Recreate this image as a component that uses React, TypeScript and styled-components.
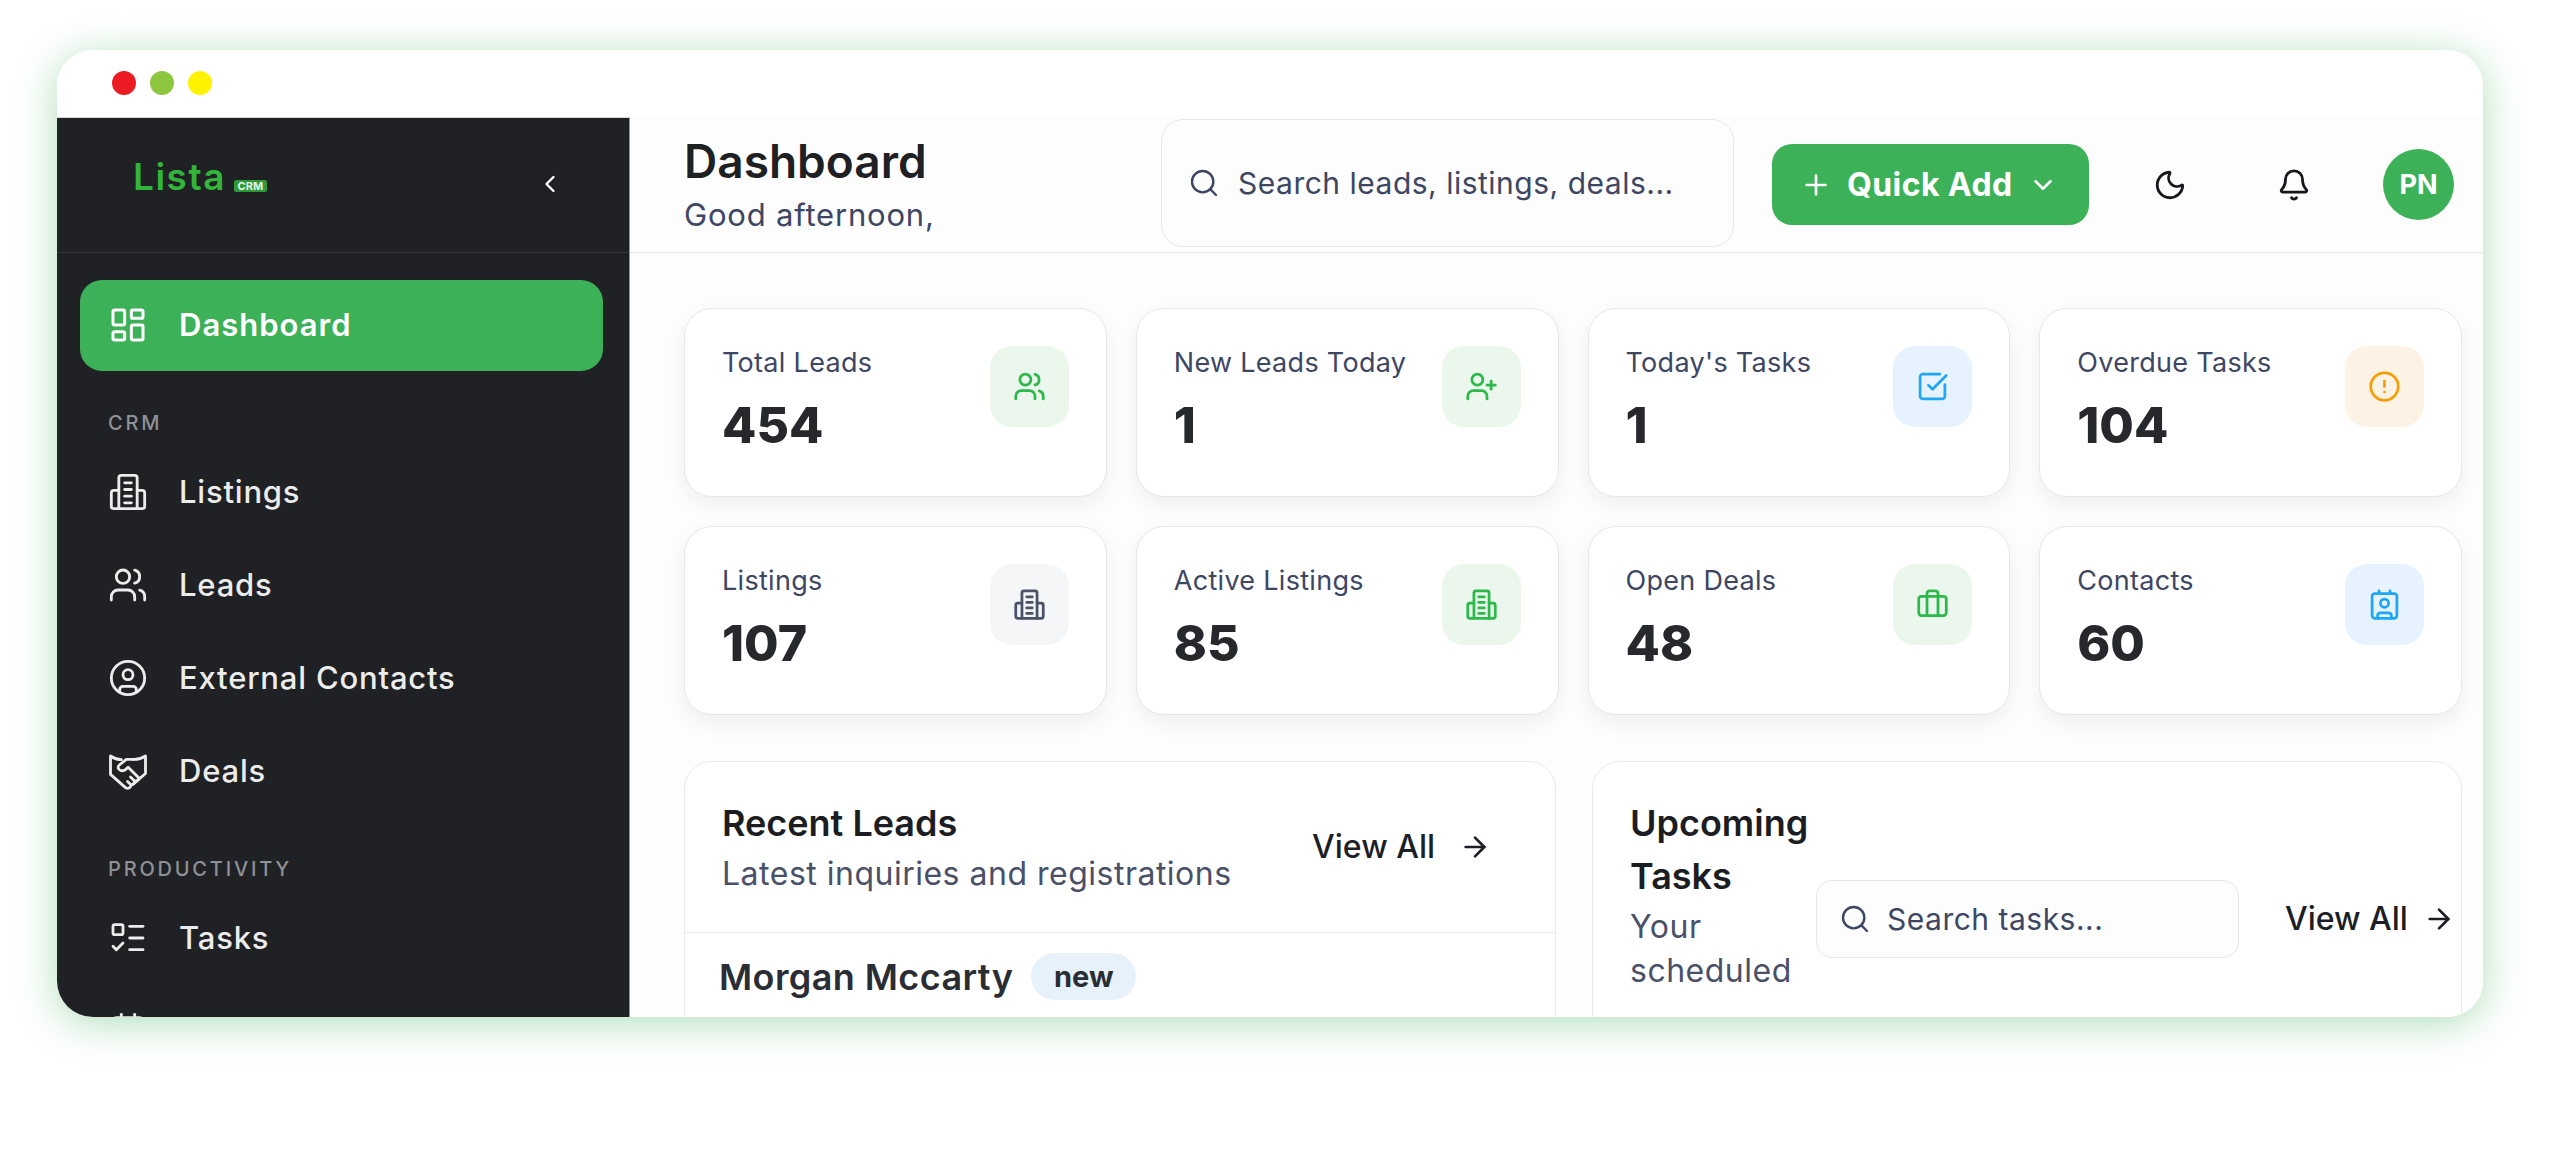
import React from 'react';
import styled, { createGlobalStyle } from 'styled-components';
import {
  ArrowRight,
  Bell,
  Briefcase,
  Calendar,
  ChevronDown,
  ChevronLeft,
  CircleAlert,
  CircleUser,
  Contact,
  LayoutDashboard,
  ListTodo,
  Moon,
  Plus,
  Search,
  SquareCheckBig,
  UserPlus,
  Users,
} from 'lucide-react';

const GlobalStyle = createGlobalStyle`
  html, body {
    margin: 0;
    padding: 0;
    background: #fff;
  }
  body {
    font-family: Inter, "Noto Sans", sans-serif;
    color: #1f2124;
  }
  * {
    box-sizing: border-box;
  }
`;

const BuildingIcon = ({ size = 24, strokeWidth = 2 }: { size?: number; strokeWidth?: number }) => (
  <svg width={size} height={size} viewBox="0 0 24 24" fill="none" stroke="currentColor" strokeWidth={strokeWidth} strokeLinecap="round" strokeLinejoin="round">
    <path d="M6.500 22V3.500A1.500 1.500 0 0 1 8 2h8a1.500 1.500 0 0 1 1.500 1.500V22Z" />
    <path d="M6.500 11H3.500A1.500 1.500 0 0 0 2 12.500v8A1.500 1.500 0 0 0 3.500 22h3" />
    <path d="M17.500 11h3a1.500 1.500 0 0 1 1.500 1.500v8a1.500 1.500 0 0 1-1.500 1.500h-3" />
    <path d="M10 6.500h4" />
    <path d="M10 10.500h4" />
    <path d="M10 14.500h4" />
    <path d="M10 18.500h4" />
  </svg>
);

const ShieldShakeIcon = ({ size = 24, strokeWidth = 2 }: { size?: number; strokeWidth?: number }) => (
  <svg width={size} height={size} viewBox="0 0 24 24" fill="none" stroke="currentColor" strokeWidth={strokeWidth} strokeLinecap="round" strokeLinejoin="round">
    <path d="M8 5.200C6 5.200 3.800 4.600 1.500 3v11l9 8c1.500 1 3 0 3.200-1.200" />
    <path d="M15 5c3 .2 5.400-.6 7.500-2v10.500L15 20" />
    <path d="M15.500 5H11L6.800 8.400c-1.200 1-.8 2.800.7 3.300 1.600.6 3.200-.5 4.600-2l6 6" />
    <path d="M18.100 15.700c.9 1.300-.8 3-2.300 2.100l-2.300-2.200" />
    <path d="M15.800 17.800c.5 1.300-1 2.800-2.300 2.200l-1.800-1.700" />
  </svg>
);

const Canvas = styled.div`
  width: 2560px;
  height: 1154px;
  padding: 50px 77px 137px 57px;
  background: #fff;
  overflow: hidden;
`;

const FrameGlow = styled.div`
  height: 100%;
  border-radius: 36px;
  box-shadow: 0 6px 40px rgba(64, 176, 90, 0.42);
`;

const Frame = styled.div`
  width: 100%;
  height: 100%;
  display: grid;
  grid-template-rows: 67px 1fr;
  background: #fff;
  border-radius: 36px;
  overflow: hidden;
`;

const TitleBar = styled.div`
  display: flex;
  align-items: center;
  gap: 14px;
  padding: 0 0 2px 55px;
`;

const Dot = styled.span<{ $color: string }>`
  width: 24px;
  height: 24px;
  border-radius: 50%;
  background: ${(p) => p.$color};
`;

const Body = styled.div`
  display: grid;
  grid-template-columns: 573px 1fr;
  min-height: 0;
`;

const Sidebar = styled.aside`
  background: #1f2124;
  border-top: 1px solid #d8d8d8;
  border-right: 1px solid #8f9296;
  overflow: hidden;
`;

const SideHead = styled.div`
  height: 135px;
  display: flex;
  align-items: center;
  justify-content: space-between;
  padding: 0 65px 3px 76px;
  border-bottom: 1px solid #34363a;
  color: #fff;
`;

const Logo = styled.div`
  display: flex;
  align-items: baseline;
  gap: 8px;
  margin-top: -14px;
  color: #33b53a;
  font-size: 37px;
  font-weight: 600;
  letter-spacing: 1.5px;
`;

const LogoBadge = styled.span`
  width: 33px;
  height: 12px;
  line-height: 12px;
  text-align: center;
  border-radius: 2px;
  background: #2d9a3a;
  color: #e6f5e6;
  font-size: 11px;
  font-weight: 700;
  letter-spacing: 0;
`;

const Nav = styled.nav`
  padding: 27px 26px 0 23px;
`;

const NavItem = styled.div<{ $active?: boolean }>`
  display: flex;
  align-items: center;
  gap: 31px;
  height: ${(p) => (p.$active ? 91 : 93)}px;
  padding: 0 0 ${(p) => (p.$active ? 2 : 0)}px 28px;
  border-radius: 22px;
  background: ${(p) => (p.$active ? '#3cb158' : 'transparent')};
  color: ${(p) => (p.$active ? '#fff' : '#ececec')};
  font-size: 31px;
  font-weight: ${(p) => (p.$active ? 600 : 500)};
  letter-spacing: ${(p) => (p.$active ? 1 : 0.8)}px;
`;

const NavLabel = styled.div`
  height: 24px;
  line-height: 24px;
  margin: 40px 0 10px 28px;
  color: #8e9195;
  font-size: 20px;
  font-weight: 500;
  letter-spacing: 2.8px;
`;

const Main = styled.main`
  min-width: 0;
  background: #fdfdfd;
  overflow: hidden;
`;

const TopBar = styled.header`
  height: 136px;
  display: flex;
  align-items: center;
  gap: 38px;
  padding: 0 29px 0 54px;
  border-bottom: 1px solid #e6e6e8;
`;

const Heading = styled.div`
  margin-right: auto;
`;

const PageTitle = styled.h1`
  margin: 0;
  font-size: 46px;
  line-height: 52px;
  font-weight: 600;
  color: #1e2024;
`;

const Greeting = styled.p`
  margin: 8px 0 0;
  font-size: 31px;
  line-height: 40px;
  letter-spacing: 0.8px;
  color: #3d4663;
`;

const SearchBox = styled.div<{ $w: number; $h: number; $r: number; $pad: number; $gap: number; $lift?: number }>`
  display: flex;
  align-items: center;
  flex: none;
  gap: ${(p) => p.$gap}px;
  width: ${(p) => p.$w}px;
  height: ${(p) => p.$h}px;
  margin-bottom: ${(p) => p.$lift ?? 0}px;
  padding-left: ${(p) => p.$pad}px;
  border: 1px solid #e6e7ea;
  border-radius: ${(p) => p.$r}px;
  background: #fdfdfd;
  color: #3d4663;
  font-size: 30px;
  letter-spacing: 0.5px;
  white-space: nowrap;
`;

const QuickAdd = styled.button`
  flex: none;
  display: flex;
  align-items: center;
  width: 317px;
  height: 81px;
  padding: 0 0 0 28px;
  border: 0;
  border-radius: 20px;
  background: #3cb158;
  color: #fff;
  font-family: inherit;
  font-size: 32px;
  font-weight: 700;
  letter-spacing: 0.4px;
  white-space: nowrap;
  gap: 15px;
`;

const IconButton = styled.div`
  flex: none;
  width: 86px;
  display: flex;
  justify-content: center;
  color: #16181c;
`;

const Avatar = styled.div`
  flex: none;
  width: 71px;
  height: 71px;
  margin-left: 8px;
  display: flex;
  align-items: center;
  justify-content: center;
  border-radius: 50%;
  background: #3cb158;
  color: #fff;
  font-size: 27px;
  font-weight: 700;
`;

const Content = styled.div`
  padding: 55px 21px 0 54px;
`;

const StatGrid = styled.div`
  display: grid;
  grid-template-columns: repeat(4, 1fr);
  grid-auto-rows: 189px;
  gap: 29px;
`;

const StatCard = styled.div`
  display: flex;
  justify-content: space-between;
  padding: 37px;
  border: 1px solid #e6e7e9;
  border-radius: 28px;
  background: #fff;
  box-shadow: 0 8px 22px rgba(20, 24, 32, 0.06);
`;

const StatLabel = styled.div`
  margin-top: 1px;
  font-size: 27px;
  line-height: 32px;
  color: #3d4663;
  white-space: nowrap;
  letter-spacing: 0.3px;
`;

const StatValue = styled.div`
  margin-top: 16px;
  font-size: 50px;
  line-height: 60px;
  font-weight: 800;
  color: #26282c;
`;

const tones: Record<string, { bg: string; fg: string }> = {
  green: { bg: '#ebf6ed', fg: '#2db84c' },
  gray: { bg: '#f5f6f8', fg: '#4a5268' },
  blue: { bg: '#e6f2fd', fg: '#1ea7f5' },
  orange: { bg: '#fdf3e4', fg: '#f59e0b' },
};

const StatIcon = styled.div<{ $tone: string }>`
  flex: none;
  width: 79px;
  height: 81px;
  display: flex;
  align-items: center;
  justify-content: center;
  border-radius: 22px;
  background: ${(p) => tones[p.$tone].bg};
  color: ${(p) => tones[p.$tone].fg};
`;

const Panels = styled.div`
  display: grid;
  grid-template-columns: 872px 1fr;
  gap: 36px;
  margin-top: 46px;
`;

const Panel = styled.section`
  min-width: 0;
  height: 400px;
  border: 1px solid #e8e9eb;
  border-radius: 28px;
  background: #fff;
`;

const PanelHead = styled.div<{ $right: number; $ruled?: boolean; $minH?: number }>`
  display: flex;
  align-items: center;
  min-height: ${(p) => p.$minH ?? 0}px;
  padding: 35px ${(p) => p.$right}px 36px 37px;
  border-bottom: ${(p) => (p.$ruled ? '1px solid #e9eaec' : '0')};
`;

const PanelTitles = styled.div<{ $w?: number }>`
  flex: none;
  align-self: flex-start;
  width: ${(p) => (p.$w ? `${p.$w}px` : 'auto')};
  margin-right: auto;
`;

const PanelTitle = styled.h2`
  margin: 0 0 2px;
  font-size: 36px;
  line-height: 53px;
  font-weight: 600;
  color: #1b1d22;
`;

const PanelSub = styled.p`
  margin: 0;
  font-size: 32px;
  line-height: 44px;
  letter-spacing: 0.5px;
  color: #4a5068;
`;

const ViewAll = styled.div<{ $gap: number; $inset?: number }>`
  flex: none;
  display: flex;
  align-items: center;
  gap: ${(p) => p.$gap}px;
  margin-left: ${(p) => p.$inset ?? 0}px;
  font-size: 32px;
  font-weight: 500;
  color: #1c1f26;
`;

const LeadRow = styled.div`
  display: flex;
  align-items: center;
  gap: 18px;
  padding: 20px 0 0 34px;
`;

const LeadName = styled.div`
  font-size: 36px;
  font-weight: 600;
  letter-spacing: 0.4px;
  color: #2a2d33;
`;

const Badge = styled.span`
  width: 105px;
  height: 47px;
  line-height: 47px;
  text-align: center;
  border-radius: 24px;
  background: #e6f1f9;
  color: #2a2d33;
  font-size: 29px;
  font-weight: 700;
`;

const stats = [
  { label: 'Total Leads', value: '454', tone: 'green', icon: <Users size={33} /> },
  { label: 'New Leads Today', value: '1', tone: 'green', icon: <UserPlus size={33} /> },
  { label: "Today's Tasks", value: '1', tone: 'blue', icon: <SquareCheckBig size={33} /> },
  { label: 'Overdue Tasks', value: '104', tone: 'orange', icon: <CircleAlert size={33} /> },
  { label: 'Listings', value: '107', tone: 'gray', icon: <BuildingIcon size={33} /> },
  { label: 'Active Listings', value: '85', tone: 'green', icon: <BuildingIcon size={33} /> },
  { label: 'Open Deals', value: '48', tone: 'green', icon: <Briefcase size={33} /> },
  { label: 'Contacts', value: '60', tone: 'blue', icon: <Contact size={33} /> },
];

export default function App() {
  return (
    <>
      <GlobalStyle />
      <Canvas>
        <FrameGlow>
          <Frame>
            <TitleBar>
              <Dot $color="#ed1c24" />
              <Dot $color="#8dc63f" />
              <Dot $color="#fff200" />
            </TitleBar>
            <Body>
              <Sidebar>
                <SideHead>
                  <Logo>
                    Lista
                    <LogoBadge>CRM</LogoBadge>
                  </Logo>
                  <ChevronLeft size={28} strokeWidth={2} />
                </SideHead>
                <Nav>
                  <NavItem $active>
                    <LayoutDashboard size={40} strokeWidth={1.8} />
                    Dashboard
                  </NavItem>
                  <NavLabel>CRM</NavLabel>
                  <NavItem>
                    <BuildingIcon size={40} strokeWidth={1.7} />
                    Listings
                  </NavItem>
                  <NavItem>
                    <Users size={40} strokeWidth={1.7} />
                    Leads
                  </NavItem>
                  <NavItem>
                    <CircleUser size={40} strokeWidth={1.7} />
                    External Contacts
                  </NavItem>
                  <NavItem>
                    <ShieldShakeIcon size={40} strokeWidth={1.7} />
                    Deals
                  </NavItem>
                  <NavLabel>PRODUCTIVITY</NavLabel>
                  <NavItem>
                    <ListTodo size={40} strokeWidth={1.7} />
                    Tasks
                  </NavItem>
                  <NavItem>
                    <Calendar size={40} strokeWidth={1.7} />
                  </NavItem>
                </Nav>
              </Sidebar>
              <Main>
                <TopBar>
                  <Heading>
                    <PageTitle>Dashboard</PageTitle>
                    <Greeting>Good afternoon,</Greeting>
                  </Heading>
                  <SearchBox $w={573} $h={128} $r={22} $pad={26} $gap={18} $lift={3}>
                    <Search size={32} strokeWidth={1.8} />
                    Search leads, listings, deals...
                  </SearchBox>
                  <QuickAdd>
                    <Plus size={32} strokeWidth={2} />
                    Quick Add
                    <ChevronDown size={30} strokeWidth={2} />
                  </QuickAdd>
                  <IconButton>
                    <Moon size={34} strokeWidth={2} />
                  </IconButton>
                  <IconButton>
                    <Bell size={34} strokeWidth={2} />
                  </IconButton>
                  <Avatar>PN</Avatar>
                </TopBar>
                <Content>
                  <StatGrid>
                    {stats.map((stat) => (
                      <StatCard key={stat.label}>
                        <div>
                          <StatLabel>{stat.label}</StatLabel>
                          <StatValue>{stat.value}</StatValue>
                        </div>
                        <StatIcon $tone={stat.tone}>{stat.icon}</StatIcon>
                      </StatCard>
                    ))}
                  </StatGrid>
                  <Panels>
                    <Panel>
                      <PanelHead $right={64} $ruled>
                        <PanelTitles>
                          <PanelTitle>Recent Leads</PanelTitle>
                          <PanelSub>Latest inquiries and registrations</PanelSub>
                        </PanelTitles>
                        <ViewAll $gap={24}>
                          View All
                          <ArrowRight size={32} strokeWidth={2} />
                        </ViewAll>
                      </PanelHead>
                      <LeadRow>
                        <LeadName>Morgan Mccarty</LeadName>
                        <Badge>new</Badge>
                      </LeadRow>
                    </Panel>
                    <Panel>
                      <PanelHead $right={10} $minH={314}>
                        <PanelTitles $w={186}>
                          <PanelTitle>Upcoming Tasks</PanelTitle>
                          <PanelSub>Your scheduled</PanelSub>
                        </PanelTitles>
                        <SearchBox $w={423} $h={78} $r={16} $pad={22} $gap={16}>
                          <Search size={32} strokeWidth={1.8} />
                          Search tasks...
                        </SearchBox>
                        <ViewAll $gap={15} $inset={46}>
                          View All
                          <ArrowRight size={32} strokeWidth={2} />
                        </ViewAll>
                      </PanelHead>
                    </Panel>
                  </Panels>
                </Content>
              </Main>
            </Body>
          </Frame>
        </FrameGlow>
      </Canvas>
    </>
  );
}
